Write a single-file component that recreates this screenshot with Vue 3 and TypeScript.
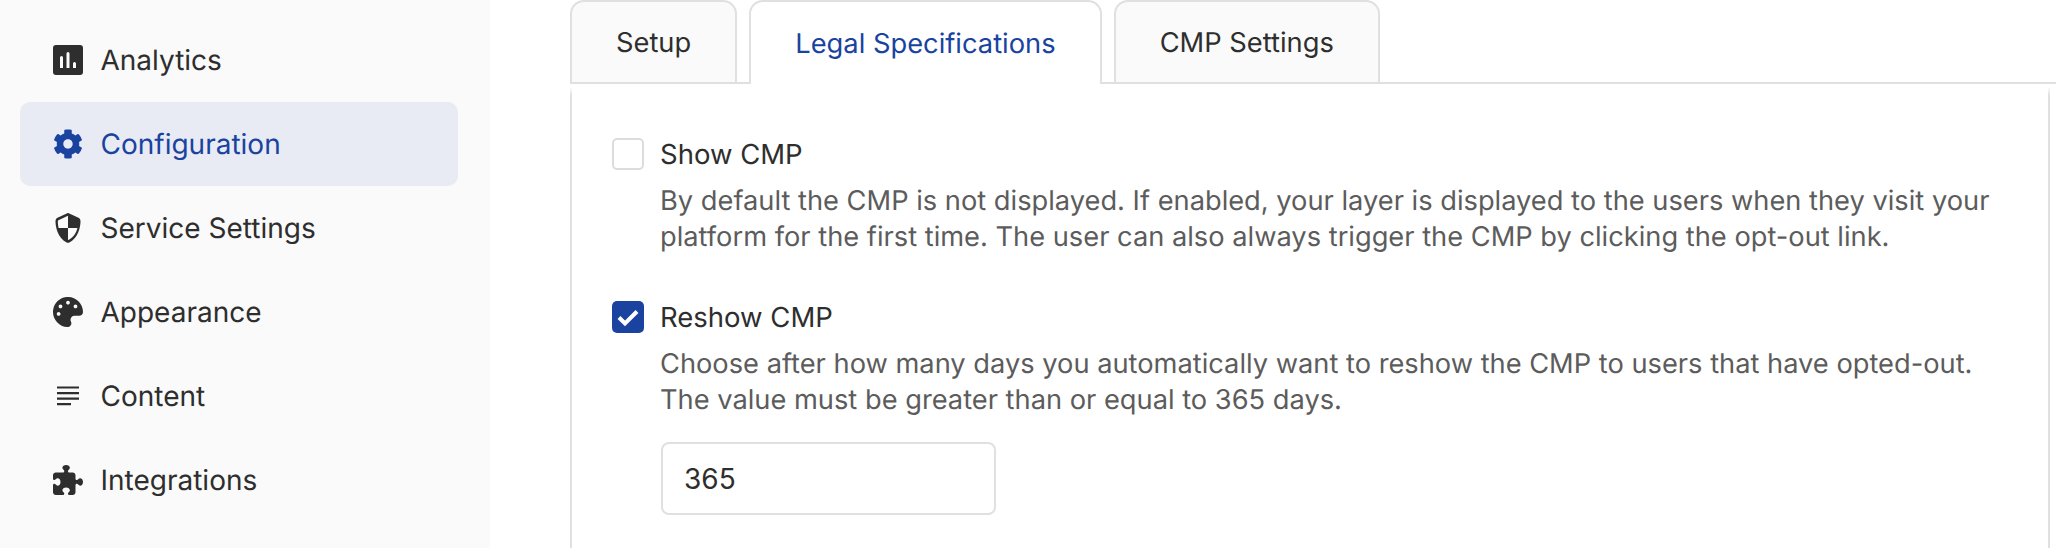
<script setup lang="ts">
type NavItem = {
  label: string;
  viewBox: string;
  path: string;
  active?: boolean;
};

const navItems: NavItem[] = [
  {
    label: 'Analytics',
    viewBox: '0 0 30 30',
    path: 'M3 0h24a3 3 0 0 1 3 3v24a3 3 0 0 1-3 3H3a3 3 0 0 1-3-3V3a3 3 0 0 1 3-3zM7 12.5V23h3V12.5a1.5 1.5 0 0 0-3 0zM13.5 8.5V23h3V8.5a1.5 1.5 0 0 0-3 0zM20 18.5V23h3v-4.5a1.5 1.5 0 0 0-3 0z',
  },
  {
    label: 'Configuration',
    active: true,
    viewBox: '0 0 512 512',
    path: 'M487.4 315.7l-42.6-24.6c4.3-23.2 4.3-47 0-70.2l42.6-24.6c4.9-2.8 7.1-8.6 5.5-14-11.1-35.6-30-67.8-54.7-94.6-3.8-4.1-10-5.1-14.8-2.3L380.8 110c-17.9-15.4-38.5-27.3-60.8-35.1V25.8c0-5.6-3.9-10.5-9.4-11.7-36.7-8.2-74.3-7.8-109.2 0-5.5 1.2-9.4 6.1-9.4 11.7V75c-22.2 7.9-42.8 19.8-60.8 35.1L88.7 85.5c-4.9-2.8-11-1.9-14.8 2.3-24.7 26.7-43.6 58.9-54.7 94.6-1.7 5.4.6 11.2 5.5 14L67.3 221c-4.3 23.2-4.3 47 0 70.2l-42.6 24.6c-4.9 2.8-7.1 8.6-5.5 14 11.1 35.6 30 67.8 54.7 94.6 3.8 4.1 10 5.1 14.8 2.3l42.6-24.6c17.9 15.4 38.5 27.3 60.8 35.1v49.2c0 5.6 3.9 10.5 9.4 11.7 36.7 8.2 74.3 7.8 109.2 0 5.5-1.2 9.4-6.1 9.4-11.7v-49.2c22.2-7.9 42.8-19.8 60.8-35.1l42.6 24.6c4.9 2.8 11 1.9 14.8-2.3 24.7-26.7 43.6-58.9 54.7-94.6 1.5-5.5-.7-11.3-5.6-14.1zM256 336c-44.1 0-80-35.9-80-80s35.9-80 80-80 80 35.9 80 80-35.9 80-80 80z',
  },
  {
    label: 'Service Settings',
    viewBox: '-32 0 576 512',
    // outer shield with the top-left and bottom-right quarters cut out
    path: 'M256 0c4.6 0 9.2 1 13.4 2.9L457.7 82.8c22 9.3 38.4 31 38.3 57.2c-.5 99.2-41.3 280.7-213.6 363.2c-16.7 8-36.1 8-52.8 0C57.3 420.7 16.5 239.2 16 140c-.1-26.2 16.3-47.9 38.3-57.2L242.7 2.9C246.8 1 251.4 0 256 0zM256 48L72 124c-7 3-11 9-11 16c0 34 3 74 14 116H256zM256 256V462c3 0 6-1 9-2c106-50 154-134 172-204z',
  },
  {
    label: 'Appearance',
    viewBox: '0 0 512 512',
    path: 'M204.3 5C104.9 24.4 24.8 104.3 5.2 203.4c-37 187 131.7 326.4 258.8 306.7 41.2-6.4 61.4-54.6 42.5-91.7-23.1-45.4 9.9-98.4 60.9-98.4h79.7c35.8 0 64.8-29.6 64.9-65.3C511.5 97.1 368.1-26.9 204.3 5zM96 320c-17.7 0-32-14.3-32-32s14.3-32 32-32 32 14.3 32 32-14.3 32-32 32zm32-128c-17.7 0-32-14.3-32-32s14.3-32 32-32 32 14.3 32 32-14.3 32-32 32zm128-64c-17.7 0-32-14.3-32-32s14.3-32 32-32 32 14.3 32 32-14.3 32-32 32zm128 64c-17.7 0-32-14.3-32-32s14.3-32 32-32 32 14.3 32 32-14.3 32-32 32z',
  },
  {
    label: 'Content',
    viewBox: '0 0 30 30',
    path: 'M4 5.4h22v2.2H4zM4 11h22v2.2H4zM4 16.6h22v2.2H4zM4 22h14v2.2H4z',
  },
  {
    label: 'Integrations',
    viewBox: '0 0 512 512',
    path: 'M192 104.8c0-9.2-5.8-17.3-13.2-22.8C167.2 73.3 160 61.3 160 48c0-26.5 28.7-48 64-48s64 21.5 64 48c0 13.3-7.2 25.3-18.8 34c-7.4 5.5-13.2 13.6-13.2 22.8c0 12.8 10.4 23.2 23.2 23.2H336c26.5 0 48 21.5 48 48v56.8c0 12.8 10.4 23.2 23.2 23.2c9.2 0 17.3-5.8 22.8-13.2c8.7-11.6 20.7-18.8 34-18.8c26.5 0 48 28.7 48 64s-21.5 64-48 64c-13.3 0-25.3-7.2-34-18.8c-5.5-7.4-13.6-13.2-22.8-13.2c-12.8 0-23.2 10.4-23.2 23.2V464c0 26.5-21.5 48-48 48H279.2c-12.8 0-23.2-10.4-23.2-23.2c0-9.2 5.8-17.3 13.2-22.8c11.6-8.7 18.8-20.7 18.8-34c0-26.5-28.7-48-64-48s-64 21.5-64 48c0 13.3 7.2 25.3 18.8 34c7.4 5.5 13.2 13.6 13.2 22.8c0 12.8-10.4 23.2-23.2 23.2H48c-26.5 0-48-21.5-48-48V343.2C0 330.4 10.4 320 23.2 320c9.2 0 17.3 5.8 22.8 13.2C54.7 344.8 66.7 352 80 352c26.5 0 48-28.7 48-64s-21.5-64-48-64c-13.3 0-25.3 7.2-34 18.8C40.5 250.2 32.4 256 23.2 256C10.4 256 0 245.6 0 232.8V176c0-26.5 21.5-48 48-48H168.8c12.8 0 23.2-10.4 23.2-23.2z',
  },
];

const tabs = ['Setup', 'Legal Specifications', 'CMP Settings'];
const activeTab = 'Legal Specifications';
</script>

<template>
  <div class="page">
    <aside class="sidebar">
      <a
        v-for="item in navItems"
        :key="item.label"
        class="nav-item"
        :class="{ active: item.active }"
      >
        <svg
          class="nav-icon"
          :viewBox="item.viewBox"
          preserveAspectRatio="none"
          fill="currentColor"
          fill-rule="evenodd"
        >
          <path :d="item.path" />
        </svg>
        <span>{{ item.label }}</span>
      </a>
    </aside>

    <main class="main">
      <div class="tabs">
        <div
          v-for="tab in tabs"
          :key="tab"
          class="tab"
          :class="{ active: tab === activeTab }"
        >
          {{ tab }}
        </div>
      </div>

      <section class="panel">
        <div class="field">
          <div class="field-head">
            <span class="checkbox"></span>
            <label>Show CMP</label>
          </div>
          <p class="hint">
            By default the CMP is not displayed. If enabled, your layer is displayed to the users when they visit your<br />
            platform for the first time. The user can also always trigger the CMP by clicking the opt-out link.
          </p>
        </div>

        <div class="field">
          <div class="field-head">
            <span class="checkbox checked">
              <svg viewBox="0 0 32 32" fill="none" stroke="#fff" stroke-width="4">
                <path d="M7 16.5l6 6L25 10.5" />
              </svg>
            </span>
            <label>Reshow CMP</label>
          </div>
          <p class="hint">
            Choose after how many days you automatically want to reshow the CMP to users that have opted-out.<br />
            The value must be greater than or equal to 365 days.
          </p>
          <input class="days" type="text" value="365" />
        </div>
      </section>
    </main>
  </div>
</template>

<style>
html,
body {
  margin: 0;
  background: #fff;
}
</style>

<style scoped>
.page {
  display: flex;
  height: 548px;
  overflow: hidden;
  font-family: Inter, "Noto Sans", sans-serif;
  color: #2e2e2e;
  text-rendering: geometricPrecision;
}

.sidebar {
  width: 490px;
  flex-shrink: 0;
  box-sizing: border-box;
  padding: 18px 32px 0 20px;
  background: #fafafa;
}

.nav-item {
  display: flex;
  align-items: center;
  gap: 17.5px;
  height: 84px;
  padding-left: 33px;
  border-radius: 10px;
  font-size: 28px;
}

.nav-item.active {
  background: #e8ebf4;
  color: #1a43a0;
}

.nav-icon {
  width: 30px;
  height: 30px;
  flex-shrink: 0;
}

.main {
  flex: 1;
  min-width: 0;
  padding-left: 80px;
}

.tabs {
  display: flex;
  align-items: flex-start;
  gap: 12px;
  height: 84px;
  box-sizing: border-box;
  border-bottom: 2px solid #e0e0e0;
}

.tab {
  display: flex;
  align-items: center;
  box-sizing: border-box;
  height: 82px;
  padding: 0 44px;
  border: 2px solid #e0e0e0;
  border-bottom: 0;
  border-radius: 14px 14px 0 0;
  background: #fafafa;
  font-size: 27.3px;
}

.tab.active {
  height: 84px;
  background: #fff;
  color: #1a43a0;
}

.panel {
  box-sizing: border-box;
  height: 464px;
  margin-right: 6px;
  padding: 54px 40px 0;
  border-left: 2px solid;
  border-right: 2px solid;
  border-image: linear-gradient(transparent 4px, #e0e0e0 12px) 1;
}

.field {
  margin-bottom: 46px;
}

.field-head {
  display: flex;
  align-items: center;
  gap: 16px;
  height: 32px;
  font-size: 27.5px;
}

.checkbox {
  width: 32px;
  height: 32px;
  box-sizing: border-box;
  border: 2px solid #dcdcdc;
  border-radius: 5px;
  background: #fff;
}

.checkbox.checked {
  border: 0;
  background: #1a43a0;
}

.checkbox svg {
  display: block;
}

.hint {
  margin: 13px 0 0 48px;
  font-size: 27.25px;
  line-height: 36px;
  white-space: nowrap;
  color: #5c5c5c;
}

.days {
  display: block;
  width: 335px;
  height: 73px;
  box-sizing: border-box;
  margin: 24px 0 0 49px;
  padding: 0 21px;
  border: 2px solid #e0e0e0;
  border-radius: 8px;
  outline: none;
  font-family: inherit;
  font-size: 28px;
  color: #2e2e2e;
}
</style>
